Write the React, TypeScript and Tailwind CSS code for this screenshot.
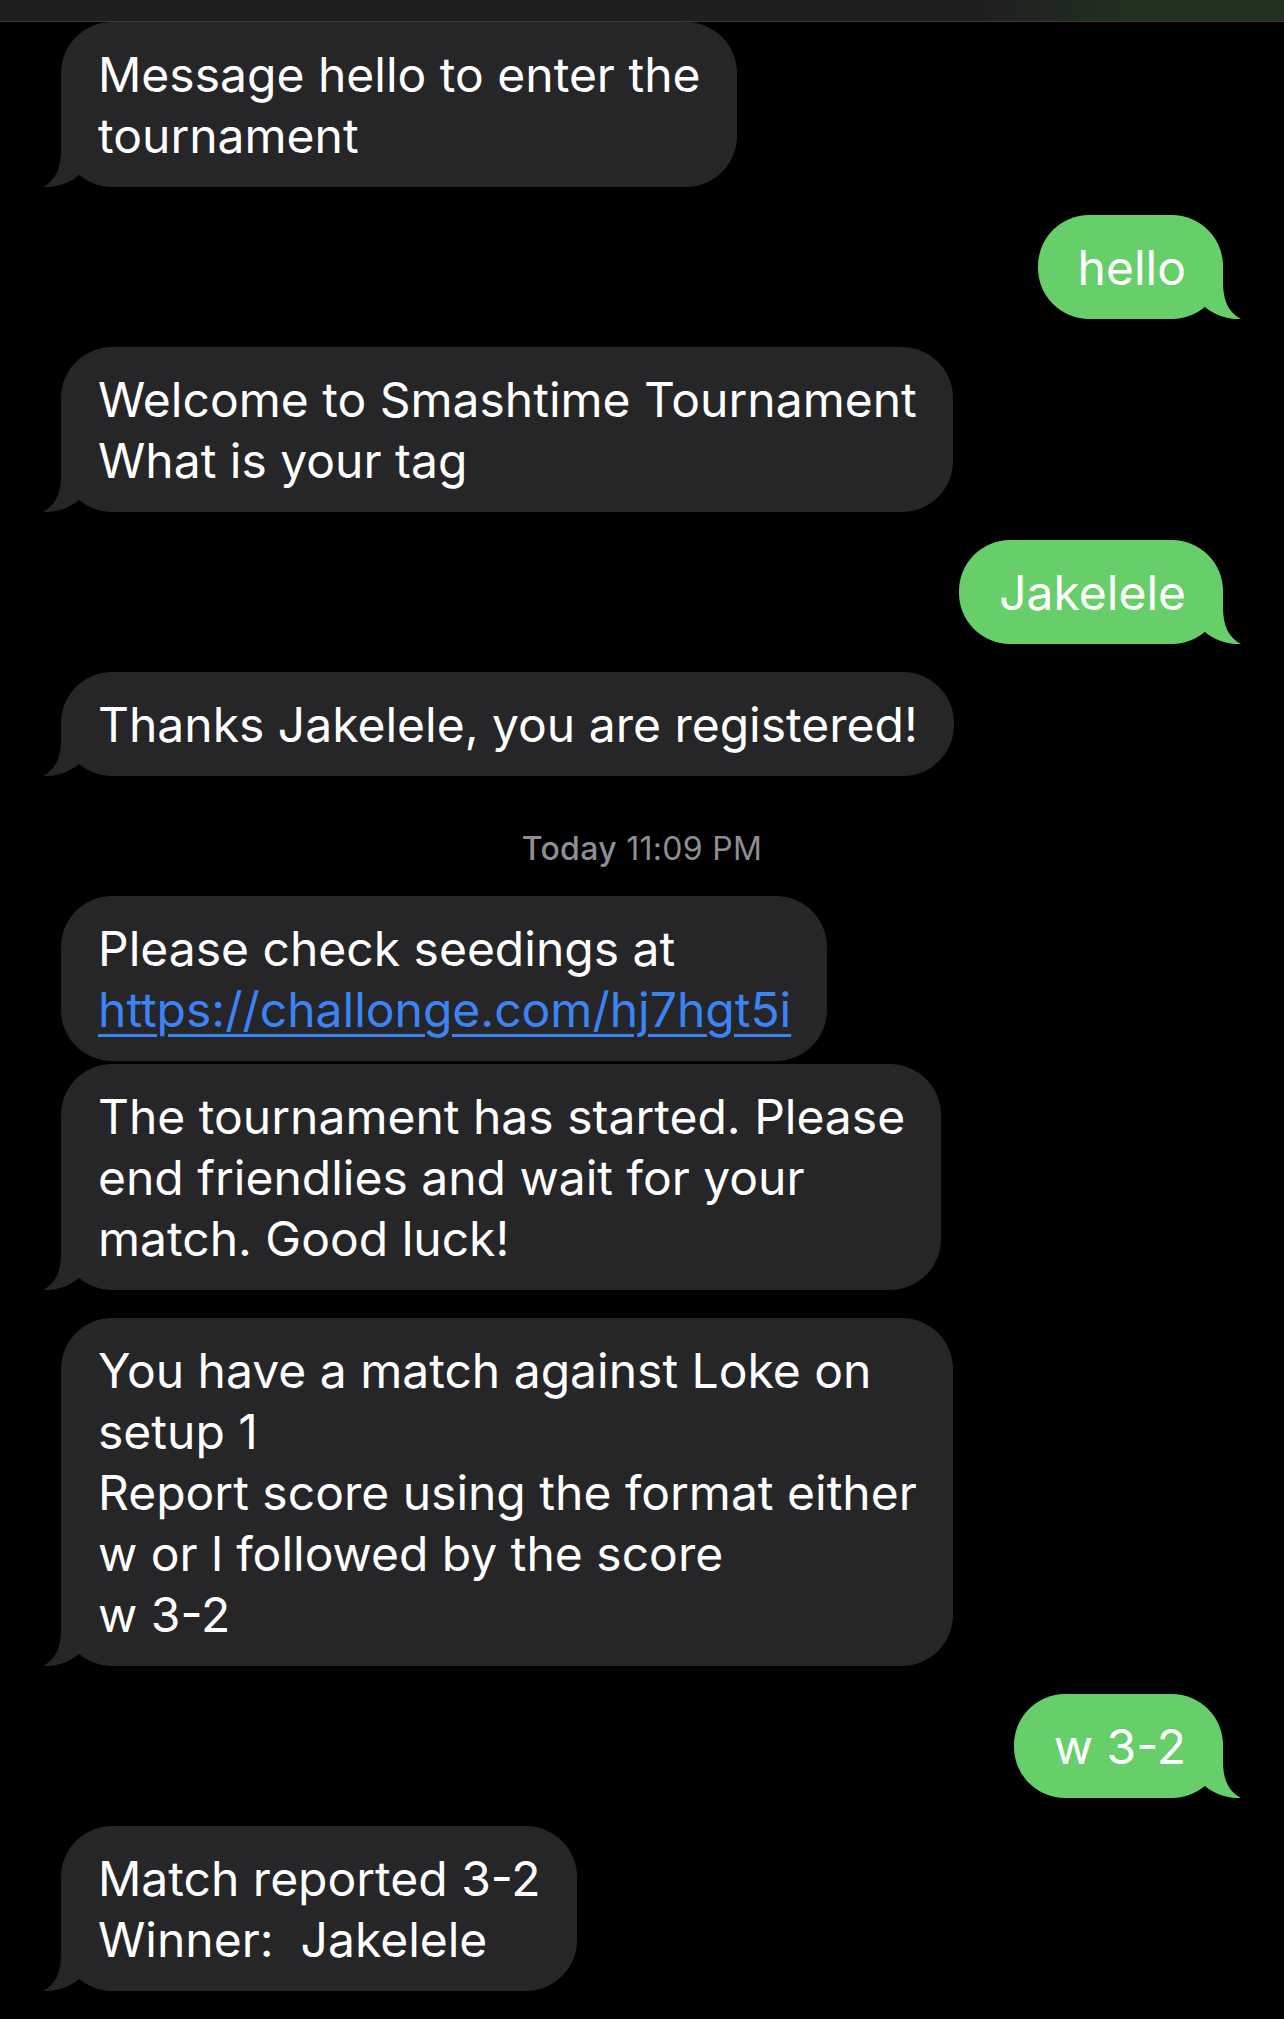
import React from "react"

type Msg =
  | { kind: "in" | "out"; lines: React.ReactNode[]; tail?: boolean; gap?: string }
  | { kind: "time"; gap?: string }

function Tail({ color, side }: { color: string; side: "left" | "right" }) {
  return (
    <svg
      viewBox="0 0 60 56"
      className={
        side === "left"
          ? "absolute bottom-0 left-[-18px] h-[56px] w-[60px]"
          : "absolute bottom-0 right-[-18px] h-[56px] w-[60px] -scale-x-100"
      }
    >
      <path d="M18 0 L18 19 C18 37 13 49 0 56 C11 56.6 26 53 36 44 L60 44 L60 0 Z" fill={color} />
    </svg>
  )
}

function Bubble({ side, lines, tail = true }: { side: "in" | "out"; lines: React.ReactNode[]; tail?: boolean }) {
  const isIn = side === "in"
  const color = isIn ? "#262628" : "#67cf6a"
  return (
    <div
      className={
        isIn
          ? "relative self-start rounded-[51px] bg-[#262628] py-[21.5px] pl-[37px] pr-[36px]"
          : "relative self-end rounded-[51px] bg-[#67cf6a] py-[21.5px] pl-[40px] pr-[37px]"
      }
    >
      {tail && <Tail color={color} side={isIn ? "left" : "right"} />}
      <div className="relative text-[48px] leading-[61px] text-white whitespace-nowrap">
        {lines.map((l, i) => (
          <div key={i}>{l}</div>
        ))}
      </div>
    </div>
  )
}

const messages: Msg[] = [
  { kind: "in", lines: ["Message hello to enter the", "tournament"], gap: "mt-0" },
  { kind: "out", lines: ["hello"] },
  { kind: "in", lines: ["Welcome to Smashtime Tournament", "What is your tag"] },
  { kind: "out", lines: ["Jakelele"] },
  { kind: "in", lines: ["Thanks Jakelele, you are registered!"] },
  { kind: "time" },
  {
    kind: "in",
    tail: false,
    gap: "mt-[28px]",
    lines: [
      "Please check seedings at",
      <a key="l" href="#" className="text-[#3c84f5] underline decoration-[3px] underline-offset-[7px]">
        https://challonge.com/hj7hgt5i
      </a>,
    ],
  },
  {
    kind: "in",
    gap: "mt-[3px]",
    lines: ["The tournament has started. Please", "end friendlies and wait for your", "match. Good luck!"],
  },
  {
    kind: "in",
    lines: [
      "You have a match against Loke on",
      "setup 1",
      "Report score using the format either",
      "w or l followed by the score",
      "w 3-2",
    ],
  },
  { kind: "out", lines: ["w 3-2"] },
  { kind: "in", lines: ["Match reported 3-2", "Winner:\u00a0 Jakelele"] },
]

export default function App() {
  return (
    <div className="h-[2019px] w-full overflow-hidden bg-black font-['Inter','Liberation_Sans',sans-serif]">
      {/* status strip */}
      <div className="h-[22px] w-full border-b border-[#3a3a3a] bg-[linear-gradient(to_right,#1f1f1f_77%,#21301f_88%)]" />

      <div className="flex flex-col px-[61px]">
        {messages.map((m, i) => {
          if (m.kind === "time") {
            return (
              <div key={i} className="mt-[54px] text-center text-[32px] leading-[38px] tracking-[0.3px] text-[#8e8e93]">
                <span className="font-medium">Today</span> 11:09 PM
              </div>
            )
          }
          return (
            <div key={i} className={"flex flex-col " + (m.gap ?? "mt-[28px]")}>
              <Bubble side={m.kind} lines={m.lines} tail={m.tail} />
            </div>
          )
        })}
      </div>
    </div>
  )
}
